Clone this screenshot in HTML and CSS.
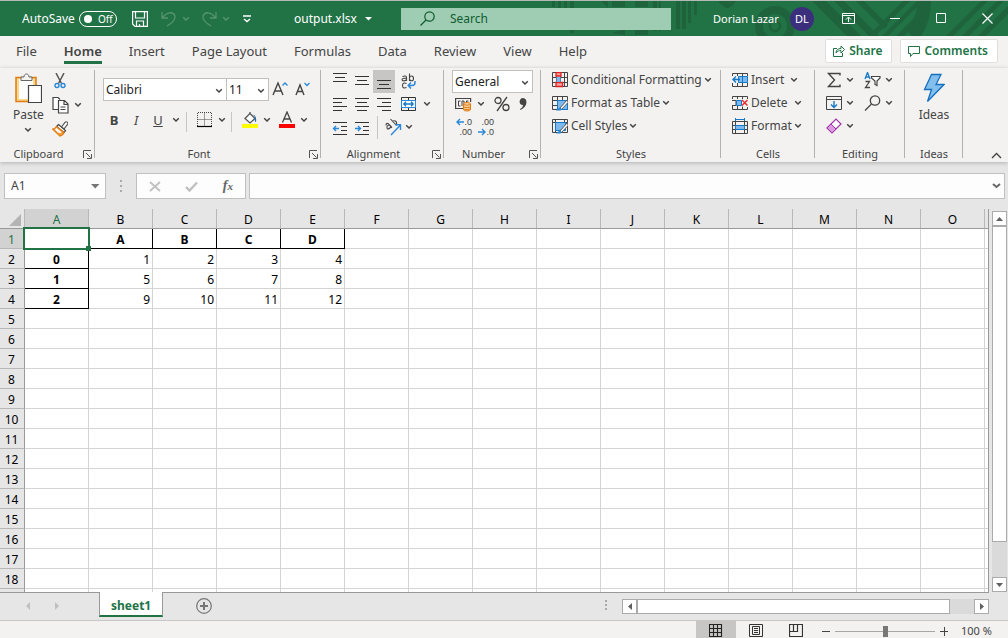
FILE: index.html
```html
<!DOCTYPE html>
<html lang="en">
<head>
<meta charset="utf-8">
<title>output.xlsx</title>
<link rel="stylesheet" href="styles.css">
</head>
<body>
<svg class="defs" aria-hidden="true">
  <symbol id="chev" viewBox="0 0 8 6"><path d="M1.2 1.2L4 4l2.8-2.8" fill="none" stroke="currentColor" stroke-width="1.5"/></symbol>
  <symbol id="launch" viewBox="0 0 9 9"><path d="M.5 8V.5H8M3 3l4.500 4.500M8.500 4v4.500H4" fill="none" stroke="#555"/></symbol>
</svg>

<header class="titlebar">
  <svg class="pattern" viewBox="0 0 458 35" aria-hidden="true">
    <g fill="#1f633d">
      <path d="M2 0h3v6H2zM8 0h3v28H8zM14 0h3v28h-3zM20 0h4v32h-4zM51 0l7 7V0zM62 0h13v6H62zM85 0h13v6H85zM103 0h4v30h-4zM109 0h2v30h-2zM62 32l13-4v6zM85 28h13v6H85zM126 0h4v28h-4zM132 0h4v28h-4zM138 0h3v22h-3zM144 0h3v14h-3zM168 0h18q-8 14-18 0z"/>
      <path d="M262 0h14l35 35h-14zM284 0h10l35 35h-10zM306 0h8l24 24-4 4z"/>
      <path d="M318 35L353 0h7l-35 35zM332 35L367 0h6l-35 35zM346 35l27-27v8l-19 19zM396 35l35-35h7l-35 35zM412 35l35-35h7l-35 35zM428 35l30-30v8l-22 22z"/>
    </g>
    <g fill="none" stroke="#1f633d">
      <circle cx="225" cy="25" r="16" stroke-width="8"/>
      <circle cx="225" cy="25" r="5" stroke-width="3"/>
      <path d="M374 0q0 22-12 35" stroke-width="14"/>
    </g>
  </svg>
  <div class="quick">
    <label class="autosave"><span>AutoSave</span><button class="toggle" role="switch" aria-checked="false"><i></i>Off</button></label>
    <button class="tool save" aria-label="Save"><svg width="16" height="16" fill="none" stroke="#fff" stroke-width="1.2"><path d="M.6.6h14.800v14.800H3L.6 13zM3.500.6v6.400h9V.6M4.500 15.400V10h7v5.400M7.500 15.400V13"/></svg></button>
    <button class="tool dim undo" aria-label="Undo"><svg width="16" height="17" fill="none" stroke="currentColor" stroke-width="1.3"><path d="M1 2v6h6M1.500 7.500C6 2 12 1 14 6c1 4-3 7-8 10"/></svg><svg class="chev"><use href="#chev"/></svg></button>
    <button class="tool dim redo" aria-label="Redo"><svg width="16" height="17" fill="none" stroke="currentColor" stroke-width="1.3"><path d="M15 2v6H9M14.500 7.500C10 2 4 1 2 6c-1 4 3 7 8 10"/></svg><svg class="chev"><use href="#chev"/></svg></button>
    <button class="tool" aria-label="Customize toolbar"><svg width="8" height="8" fill="none" stroke="#fff" stroke-width="1.400"><path d="M0 1h8M1 4l3 2.500L7 4"/></svg></button>
    <button class="tool filename">output.xlsx<svg width="7" height="4"><path d="M0 0h7L3.500 3.500z" fill="#fff"/></svg></button>
  </div>
  <label class="search"><svg width="15" height="15" fill="none" stroke="#0e5c2f" stroke-width="1.200"><circle cx="9.500" cy="5.500" r="4.700"/><path d="M6 9L.5 14.500"/></svg><input type="text" placeholder="Search" aria-label="Search"></label>
  <div class="account">
    <span class="user">Dorian Lazar</span><span class="avatar">DL</span>
    <div class="window">
      <button class="tool" aria-label="Ribbon display options"><svg width="13" height="11" fill="none" stroke="#fff"><path d="M.5.5h12v10H.5zM.5 2.500h12M6.500 9V4.500M4 6.500l2.500-2.500L9 6.500"/></svg></button>
      <button class="tool" aria-label="Minimize"><svg width="11" height="11" stroke="#fff"><path d="M0 5.500h10"/></svg></button>
      <button class="tool" aria-label="Maximize"><svg width="11" height="11" fill="none" stroke="#fff"><path d="M.5.5h9v9h-9z"/></svg></button>
      <button class="tool" aria-label="Close"><svg width="11" height="11" stroke="#fff" stroke-width="1.200"><path d="M.5.5l10 10M10.500.5l-10 10"/></svg></button>
    </div>
  </div>
</header>

<nav class="tabs">
  <a href="#file">File</a><a href="#home" class="on">Home</a><a href="#insert">Insert</a><a href="#layout">Page Layout</a><a href="#formulas">Formulas</a><a href="#data">Data</a><a href="#review">Review</a><a href="#view">View</a><a href="#help">Help</a>
  <div class="share">
    <button><svg width="12" height="12" fill="none" stroke="#217346"><path d="M4 3.500H.5v8h9V8M3 8c0-3 2-4.500 5-4.500V1l3.500 3.500L8 8V5.500C6 5.500 4.500 6 3 8z"/></svg>Share</button>
    <button><svg width="12" height="12" fill="none" stroke="#217346"><path d="M.5 1.500h11v7H5L2.500 11.500v-3h-2z"/></svg>Comments</button>
  </div>
</nav>

<div class="ribbon">
  <section class="group g-clip">
    <div class="body">
      <button class="big"><svg width="28" height="31"><path d="M2 4.500h20v24H2z" fill="#f8d98c" stroke="#e07b10" stroke-width="1.500"/><path d="M5 6h14v20H5z" fill="#fcfcfc"/><path d="M7 7.500V4h3c0-4 5-4 5 0h3v3.500z" fill="#f3f2f1" stroke="#666"/><path d="M14.500 12.500h13v17h-13z" fill="#fff" stroke="#444" stroke-width="1.200"/></svg>Paste<svg class="chev"><use href="#chev"/></svg></button>
      <div class="stack">
        <button class="b" aria-label="Cut"><svg width="16" height="16" fill="none"><path d="M4 0l5.500 10.500M12 0L6.500 10.500" stroke="#555" stroke-width="1.500"/><circle cx="5" cy="12.500" r="2" stroke="#2b88d8" stroke-width="1.400"/><circle cx="11" cy="12.500" r="2" stroke="#2b88d8" stroke-width="1.400"/></svg></button>
        <button class="b" aria-label="Copy"><svg width="17" height="17" fill="#fff" stroke="#444" stroke-width="1.200"><path d="M7 12.500H1v-12h5l2 2"/><path d="M6.500 3.500h6l3.500 3.500v9H6.500zM12 3.500V7.500h4M8.500 10h5M8.500 12.500h5"/></svg><svg class="chev"><use href="#chev"/></svg></button>
        <button class="b" aria-label="Format Painter"><svg width="16" height="16"><path d="M9.500 6L13 1.500q1.500-1.500 2.500 0t-.5 2.500L12 8z" fill="#fff" stroke="#555" stroke-width="1.200"/><path d="M6.500 3.500l7 6-1.500 2-7.500-6z" fill="#fff" stroke="#444" stroke-width="1.200"/><path d="M4.500 5.500C3 7.500 1.500 8 .5 8l7.500 7.200c2-.5 3.500-2 4-3.700z" fill="#f6a04c" stroke="#e07b10" stroke-width="1.200"/><path d="M4.500 7L9.500 11l-1 1-2.500-.5L3 8.500z" fill="#fff"/></svg></button>
      </div>
    </div>
    <h2>Clipboard</h2><button class="launch" aria-label="Clipboard options"><svg width="9" height="9"><use href="#launch"/></svg></button>
  </section>

  <section class="group g-font">
    <div class="body rows">
      <div class="row combos">
        <span class="combo face"><select aria-label="Font"><option>Calibri</option></select><svg class="chev"><use href="#chev"/></svg></span><span class="combo size"><select aria-label="Font size"><option>11</option></select><svg class="chev"><use href="#chev"/></svg></span>
        <button class="b a1" aria-label="Increase font size"><svg width="16" height="17" fill="none"><path d="M1 14L6 2l5 12M2.500 10h7" stroke="#444" stroke-width="1.400"/><path d="M10.500 4.500L13 2l2.500 2.500" stroke="#2b88d8" stroke-width="1.300"/></svg></button>
        <button class="b a2" aria-label="Decrease font size"><svg width="16" height="17" fill="none"><path d="M1 14L5 4l4 10M2.500 10.500h5" stroke="#444" stroke-width="1.400"/><path d="M9.500 2L12 4.500 14.500 2" stroke="#2b88d8" stroke-width="1.300"/></svg></button>
      </div>
      <div class="row marks">
        <button class="b" aria-label="Bold"><b>B</b></button><button class="b" aria-label="Italic"><em>I</em></button><button class="b" aria-label="Underline"><u>U</u></button><button class="b arrow" aria-label="Underline style"><svg class="chev"><use href="#chev"/></svg></button>
        <i class="sep"></i>
        <button class="b split" aria-label="Borders"><svg width="16" height="16" fill="none"><path d="M.5 14V.5h14V14M7.500.5V14M.5 7.500h14" stroke="#444" stroke-dasharray="1 1"/><path d="M0 14.500h15" stroke="#000" stroke-width="1.200"/></svg><svg class="chev"><use href="#chev"/></svg></button>
        <i class="sep"></i>
        <button class="b split" aria-label="Fill color"><svg width="16" height="18"><path d="M8 2.500l5 5-5 4.500-5-4.500L8 2.500V1" fill="#fff" stroke="#555" stroke-width="1.300"/><path d="M11 3.500q4 1 3 7.500-2 0-1-5z" fill="#1f6fb5"/><path d="M0 13h16v4H0z" fill="#ff0"/></svg><svg class="chev"><use href="#chev"/></svg></button>
        <button class="b split" aria-label="Font color"><svg width="16" height="18"><path d="M3.500 11.500L8 1l4.500 10.500M5 8h6" fill="none" stroke="#444" stroke-width="1.300"/><path d="M0 13h16v4H0z" fill="red"/></svg><svg class="chev"><use href="#chev"/></svg></button>
      </div>
    </div>
    <h2>Font</h2><button class="launch" aria-label="Font options"><svg width="9" height="9"><use href="#launch"/></svg></button>
  </section>

  <section class="group g-align">
    <div class="body aligns">
      <button class="b" aria-label="Top align"><svg width="16" height="16" stroke="#333"><path d="M1 .5h14M3 4.500h10M1 8.500h14"/></svg></button>
      <button class="b" aria-label="Middle align"><svg width="16" height="16" stroke="#333"><path d="M1 3.500h14M3 7.500h10M1 11.500h14"/></svg></button>
      <button class="b pressed" aria-label="Bottom align"><svg width="16" height="16" stroke="#333"><path d="M1 7.500h14M3 11.500h10M1 15.500h14"/></svg></button>
      <button class="b wrap" aria-label="Wrap text"><svg width="16" height="17" fill="none" stroke="#444" stroke-width="1.100"><path d="M1.500 3.500q4-1.500 4 1V8M5.500 5C2.500 5 1 5.500 1 6.800S4.500 8.500 5.500 6.500M8.500.5v7.500M8.500 5q0-2 2-2t2 2.400-2 2.400-2-2M5.500 10.500q-4-1.500-4 2t4 2"/><path d="M14 8v1.500q0 3-3 3H7.500M10 9.500l-2.800 3 2.800 3" stroke="#2b88d8" stroke-width="1.500"/></svg></button>
      <button class="b" aria-label="Align left"><svg width="16" height="16" stroke="#333"><path d="M1 2.500h14M1 6.500h9M1 10.500h14M1 14.500h9"/></svg></button>
      <button class="b" aria-label="Center"><svg width="16" height="16" stroke="#333"><path d="M1 2.500h14M3 6.500h10M1 10.500h14M3 14.500h10"/></svg></button>
      <button class="b" aria-label="Align right"><svg width="16" height="16" stroke="#333"><path d="M1 2.500h14M6 6.500h9M1 10.500h14M6 14.500h9"/></svg></button>
      <button class="b split" aria-label="Merge and center"><svg width="16" height="16" fill="none"><path d="M.5 1.500h14v13H.5zM7.500 1.500v3M7.500 11.500v3" stroke="#333"/><path d="M.5 4.500h14v7H.5z" fill="#fff" stroke="#2b88d8"/><path d="M3 8h9M5 5.800L2.800 8 5 10.200M10 5.800L12.200 8 10 10.200" stroke="#1679c5" stroke-width="1.300"/></svg><svg class="chev"><use href="#chev"/></svg></button>
      <button class="b" aria-label="Decrease indent"><svg width="16" height="16" viewBox="0 -2 16 16" fill="none" stroke="#333"><path d="M1 1.500h14M9 5.500h6M9 9.500h6M1 13.500h14"/><path d="M7 7.500H1.500M4 5L1.500 7.500 4 10" stroke="#2b88d8" stroke-width="1.400"/></svg></button>
      <button class="b" aria-label="Increase indent"><svg width="16" height="16" viewBox="0 -2 16 16" fill="none" stroke="#333"><path d="M1 1.500h14M9 5.500h6M9 9.500h6M1 13.500h14"/><path d="M1 7.500h5.500M4 5l2.500 2.500L4 10" stroke="#2b88d8" stroke-width="1.400"/></svg></button>
      <button class="b orient" aria-label="Orientation"><svg width="18" height="18" fill="none" stroke="#444" stroke-width="1.100"><path d="M2 7.500q0-2.500 2-2l4 4M5.500 7q-3 .5-2.500 3t4.500-1.500M6.500 1l6 6.500M8.500 3.500q2-1.500 3.500 0t-.5 3.500"/><path d="M7 17L16.500 7M11.500 6.800h5V12" stroke="#2b88d8" stroke-width="1.400"/></svg><svg class="chev"><use href="#chev"/></svg></button>
    </div>
    <h2>Alignment</h2><button class="launch" aria-label="Alignment options"><svg width="9" height="9"><use href="#launch"/></svg></button>
  </section>

  <section class="group g-num">
    <div class="body rows3">
      <span class="combo general"><select aria-label="Number format"><option>General</option></select><svg class="chev"><use href="#chev"/></svg></span>
      <div class="row nums">
        <button class="b split" aria-label="Accounting format"><svg width="17" height="16" fill="none"><path d="M8 12.500H.6v-10h15V6" stroke="#444" stroke-width="1.200"/><path d="M5.500 5H3.500v5h2M7 10V5h2v3M11.500 7V5h2" stroke="#444"/><path d="M8.500 8v5.500q0 1.500 3.500 1.500t3.500-1.500V8q0-1.500-3.500-1.500T8.500 8z" fill="#fbd3a4" stroke="#e07b10"/><path d="M8.500 8.500q3.500 1.500 7 0M8.500 11q3.500 1.500 7 0M8.500 13q3.500 1.500 7 0" stroke="#e07b10"/></svg><svg class="chev"><use href="#chev"/></svg></button>
        <button class="b" aria-label="Percent"><svg width="16" height="16" fill="none" stroke="#444" stroke-width="1.300"><circle cx="4" cy="4.500" r="3"/><circle cx="12" cy="11.500" r="3"/><path d="M13 1L3 15"/></svg></button>
        <button class="b" aria-label="Comma style"><svg width="10" height="14"><path d="M5 1c5 0 5 9-2.500 12l-.5-1c2-1 3-2.500 3-4C0 8 1 1 5 1z" fill="#444"/></svg></button>
      </div>
      <div class="row decimals">
        <button class="b dec" aria-label="Increase decimal"><span><svg width="8" height="8" fill="none" stroke="#2b88d8" stroke-width="1.400"><path d="M8 4H1M4 1L1 4l3 3"/></svg>.0</span><span>.00</span></button>
        <button class="b dec" aria-label="Decrease decimal"><span>.00</span><span><svg width="8" height="8" fill="none" stroke="#2b88d8" stroke-width="1.400"><path d="M0 4h7M4 1l3 3-3 3"/></svg>.0</span></button>
      </div>
    </div>
    <h2>Number</h2><button class="launch" aria-label="Number options"><svg width="9" height="9"><use href="#launch"/></svg></button>
  </section>

  <section class="group g-styles">
    <div class="body list">
      <button class="b"><svg width="16" height="16" fill="none"><path d="M.5.5h15v14H.5zM.5 5.500h15M.5 10.500h15M4.500.5v14M8.500.5v14M12.500.5v14" stroke="#444"/><path d="M4 .5h5V4H4zM4 10.500h6.500v4H4z" fill="#f6a3a3" stroke="#e02020" stroke-width="1.300"/><path d="M4.500 5h4v5h-4z" fill="#7db9ee"/></svg>Conditional Formatting<svg class="chev"><use href="#chev"/></svg></button>
      <button class="b"><svg width="16" height="16" fill="none"><path d="M.5 1.500h15v13H.5zM.5 5.500h15M.5 10.500h7M5.500 1.500v13M10.500 1.500v4" stroke="#444"/><path d="M5.500 5.500h10v9h-10z" fill="#7db9ee" stroke="#1679c5"/><path d="M15.500 4.500L8 13l1.500 1.500 6.500-7z" fill="#fff" stroke="#555"/><path d="M7.500 12.500L4 15.500h4.500q1.500-1 1-2z" fill="#2b88d8"/></svg>Format as Table<svg class="chev"><use href="#chev"/></svg></button>
      <button class="b"><svg width="16" height="16" fill="none"><path d="M.5 1.500h15v13H.5zM.5 4.500h15M3.500 1.500v13M12.500 1.500v3" stroke="#444"/><path d="M3.500 4.500h10v8h-10z" fill="#7db9ee" stroke="#1679c5"/><path d="M15.500 4.500L8 13l1.500 1.500 6.500-7z" fill="#fff" stroke="#555"/><path d="M7.500 12.500L4 15.500h4.500q1.500-1 1-2z" fill="#2b88d8"/></svg>Cell Styles<svg class="chev"><use href="#chev"/></svg></button>
    </div>
    <h2>Styles</h2>
  </section>

  <section class="group g-cells">
    <div class="body list">
      <button class="b wide"><svg width="16" height="16" fill="none"><path d="M.5 4V1.500h15V4M5.500 1.500V4M10.500 1.500V4M.5 11v3.500h15V11M5.500 11v3.500M10.500 11v3.500" stroke="#444"/><path d="M6.500 4.500h9v6h-9z" fill="#7db9ee" stroke="#1679c5"/><path d="M10.500 4.500v6" stroke="#1679c5"/><path d="M8 7.500H1M4 4.500l-3 3 3 3" stroke="#1679c5" stroke-width="1.400"/></svg>Insert<svg class="chev"><use href="#chev"/></svg></button>
      <button class="b wide"><svg width="16" height="16" fill="none"><path d="M.5 4V1.500h15V4M5.500 1.500V4M10.500 1.500V4M.5 11v3.500h15V12M5.500 11v3.500M10.500 11.500v3M0 5.500h4v5H0" stroke="#444"/><path d="M4.500 5.500h5v5h-5z" fill="#7db9ee" stroke="#1679c5"/><path d="M10 5l5.500 5.500M15.500 5L10 10.500" stroke="#e83030" stroke-width="1.500"/></svg>Delete<svg class="chev"><use href="#chev"/></svg></button>
      <button class="b"><svg width="16" height="16" fill="none"><path d="M.5 3.500v12h15v-12zM.5 7.500h15M.5 11.500h15M3.500 3.500v12M12.500 3.500v12" stroke="#444"/><path d="M3.500 7.500h9v4h-9z" fill="#7db9ee" stroke="#1679c5"/><path d="M3.500 1.500h9M3.500 0v3M12.500 0v3" stroke="#1679c5"/></svg>Format<svg class="chev"><use href="#chev"/></svg></button>
    </div>
    <h2>Cells</h2>
  </section>

  <section class="group g-edit">
    <div class="body edits">
      <button class="b split" aria-label="AutoSum"><svg width="16" height="16" fill="none" stroke="#444" stroke-width="1.400"><path d="M14 3.500V1.500H2.500L8.500 8l-6 6.500H14v-2"/></svg><svg class="chev"><use href="#chev"/></svg></button>
      <button class="b split" aria-label="Sort and filter"><svg width="17" height="17" fill="none"><path d="M1 7l2.500-6.500L6 7M2 5h3" stroke="#1679c5" stroke-width="1.300"/><path d="M1.500 9.500h4L1.500 15.500h4.500" stroke="#444" stroke-width="1.300"/><path d="M7.500 4.500h8.500v1.500L13 9v4.500l-2-1V9L7.500 6z" fill="#fff" stroke="#444" stroke-width="1.200"/></svg><svg class="chev"><use href="#chev"/></svg></button>
      <button class="b split" aria-label="Fill"><svg width="16" height="16" fill="none"><path d="M.5 1.500h15v13H.5zM.5 4.500h15" stroke="#444"/><path d="M8 6v6.500M5 9.500l3 3 3-3" stroke="#1679c5" stroke-width="1.400"/></svg><svg class="chev"><use href="#chev"/></svg></button>
      <button class="b split" aria-label="Find and select"><svg width="17" height="16" fill="none" stroke="#444" stroke-width="1.300"><circle cx="11" cy="5.500" r="4.700"/><path d="M7.500 9L1 15.500"/></svg><svg class="chev"><use href="#chev"/></svg></button>
      <button class="b split" aria-label="Clear"><svg width="16" height="16"><path d="M1 10L10 1l5 5-9 9z" fill="#fff" stroke="#a033a8" stroke-width="1.200"/><path d="M1 10l4-4 5 5-4 4z" fill="#dc9be0" stroke="#a033a8"/></svg><svg class="chev"><use href="#chev"/></svg></button>
    </div>
    <h2>Editing</h2>
  </section>

  <section class="group g-ideas">
    <div class="body">
      <button class="big"><svg width="22" height="31"><path d="M8.500 1.500h9.500l-5 10h8L4.500 28.500l4-12H1.500z" fill="#83beec" stroke="#1670c0" stroke-width="1.300"/></svg>Ideas</button>
    </div>
    <h2>Ideas</h2>
  </section>
  <button class="collapse" aria-label="Collapse ribbon"><svg width="11" height="7" fill="none" stroke="#444" stroke-width="1.400"><path d="M1 6l4.500-4.500L10 6"/></svg></button>
</div>

<div class="formula">
  <span class="combo name"><input type="text" value="A1" aria-label="Name box"><svg class="tri" width="9" height="5"><path d="M0 0h8.500L4.200 4.500z" fill="#777"/></svg></span>
  <svg class="grip" width="3" height="12" fill="#aaa"><path d="M0 0h2v2H0zM0 5h2v2H0zM0 10h2v2H0z"/></svg>
  <div class="fx">
    <button class="tool" aria-label="Cancel"><svg width="12" height="11" stroke="#c0c0c0" stroke-width="1.800"><path d="M1 1l10 9M11 1L1 10"/></svg></button>
    <button class="tool" aria-label="Enter"><svg width="13" height="11" fill="none" stroke="#c0c0c0" stroke-width="2.400"><path d="M1 6l3.500 3.500L12 1.500"/></svg></button>
    <button class="tool fn" aria-label="Insert function">f<sub>x</sub></button>
  </div>
  <span class="combo entry"><input type="text" aria-label="Formula"><svg width="9" height="6" fill="none" stroke="#666" stroke-width="2"><path d="M1 1l3.500 3L8 1"/></svg></span>
</div>

<main class="work">
  <div class="sheet">
    <table>
      <colgroup><col class="rowhead"><col span="15" class="cell"><col></colgroup>
      <thead><tr><th class="corner"><svg width="12" height="12"><path d="M12 0v12H0z" fill="#b3b3b3"/></svg></th><th class="sel">A</th><th>B</th><th>C</th><th>D</th><th>E</th><th>F</th><th>G</th><th>H</th><th>I</th><th>J</th><th>K</th><th>L</th><th>M</th><th>N</th><th>O</th><th></th></tr></thead>
      <tbody>
        <tr><th class="sel">1</th><td class="active"><i></i></td><td class="h">A</td><td class="h">B</td><td class="h">C</td><td class="h">D</td><td><td><td><td><td><td><td><td><td><td><td></tr>
        <tr><th>2</th><td class="h">0</td><td>1</td><td>2</td><td>3</td><td>4</td><td><td><td><td><td><td><td><td><td><td><td></tr>
        <tr><th>3</th><td class="h">1</td><td>5</td><td>6</td><td>7</td><td>8</td><td><td><td><td><td><td><td><td><td><td><td></tr>
        <tr><th>4</th><td class="h">2</td><td>9</td><td>10</td><td>11</td><td>12</td><td><td><td><td><td><td><td><td><td><td><td></tr>
        <tr><th>5</th><td><td><td><td><td><td><td><td><td><td><td><td><td><td><td><td></tr>
        <tr><th>6</th><td><td><td><td><td><td><td><td><td><td><td><td><td><td><td><td></tr>
        <tr><th>7</th><td><td><td><td><td><td><td><td><td><td><td><td><td><td><td><td></tr>
        <tr><th>8</th><td><td><td><td><td><td><td><td><td><td><td><td><td><td><td><td></tr>
        <tr><th>9</th><td><td><td><td><td><td><td><td><td><td><td><td><td><td><td><td></tr>
        <tr><th>10</th><td><td><td><td><td><td><td><td><td><td><td><td><td><td><td><td></tr>
        <tr><th>11</th><td><td><td><td><td><td><td><td><td><td><td><td><td><td><td><td></tr>
        <tr><th>12</th><td><td><td><td><td><td><td><td><td><td><td><td><td><td><td><td></tr>
        <tr><th>13</th><td><td><td><td><td><td><td><td><td><td><td><td><td><td><td><td></tr>
        <tr><th>14</th><td><td><td><td><td><td><td><td><td><td><td><td><td><td><td><td></tr>
        <tr><th>15</th><td><td><td><td><td><td><td><td><td><td><td><td><td><td><td><td></tr>
        <tr><th>16</th><td><td><td><td><td><td><td><td><td><td><td><td><td><td><td><td></tr>
        <tr><th>17</th><td><td><td><td><td><td><td><td><td><td><td><td><td><td><td><td></tr>
        <tr><th>18</th><td><td><td><td><td><td><td><td><td><td><td><td><td><td><td><td></tr>
        <tr><th></th><td><td><td><td><td><td><td><td><td><td><td><td><td><td><td><td></tr>
      </tbody>
    </table>
  </div>
  <div class="vscroll">
    <button aria-label="Scroll up"><svg width="7" height="4"><path d="M0 4h7L3.500 0z" fill="#606060"/></svg></button>
    <div class="track"><div class="thumb"></div></div>
    <button aria-label="Scroll down"><svg width="7" height="4"><path d="M0 0h7L3.500 4z" fill="#606060"/></svg></button>
  </div>
</main>

<div class="sheetbar">
  <div class="navs"><button class="tool" aria-label="Previous sheet"><svg width="5" height="8"><path d="M4 0v8L0 4z" fill="#c0c0c0"/></svg></button><button class="tool" aria-label="Next sheet"><svg width="5" height="8"><path d="M0 0v8l4-4z" fill="#c0c0c0"/></svg></button></div>
  <a class="sheettab" href="#sheet1">sheet1</a>
  <button class="tool add" aria-label="New sheet"><svg width="16" height="16" fill="none" stroke="#777"><circle cx="8" cy="8" r="7.300" stroke-width="1.200"/><path d="M8 4v8M4 8h8" stroke-width="2"/></svg></button>
  <svg class="grip" width="3" height="12" fill="#aaa"><path d="M0 0h2v2H0zM0 4h2v2H0zM0 8h2v2H0z"/></svg>
  <div class="hscroll">
    <button aria-label="Scroll left"><svg width="4" height="7"><path d="M4 0v7L0 3.500z" fill="#606060"/></svg></button>
    <div class="track"><div class="thumb"></div></div>
    <button aria-label="Scroll right"><svg width="4" height="7"><path d="M0 0v7l4-3.500z" fill="#606060"/></svg></button>
  </div>
</div>

<footer class="status">
  <button class="view on" aria-label="Normal"><svg width="14" height="14" fill="none" stroke="#222" stroke-width="1.100"><path d="M.5.5h12v12H.5zM4.500.5v12M8.500.5v12M.5 4.500h12M.5 8.500h12"/></svg></button>
  <button class="view" aria-label="Page layout"><svg width="14" height="14" fill="none" stroke="#333"><path d="M.5.5h13v12H.5zM3.500 2.500h7v8h-7zM5 4.500h4M5 6.500h4M5 8.500h4"/></svg></button>
  <button class="view" aria-label="Page break preview"><svg width="14" height="14" fill="none" stroke="#333" stroke-width="1.200"><path d="M.5.5h13v12H.5zM.5 7.500h8v-7M4.500.5v7"/></svg></button>
  <button class="zoom" aria-label="Zoom out"><svg width="8" height="9" stroke="#444"><path d="M0 4.500h8"/></svg></button>
  <input class="slider" type="range" min="0" max="100" value="50" aria-label="Zoom">
  <button class="zoom" aria-label="Zoom in"><svg width="9" height="9" stroke="#444"><path d="M0 4.500h8M4.500 0v9"/></svg></button>
  <span class="pct">100 %</span>
</footer>
</body>
</html>
```

FILE: styles.css
```css
* { box-sizing: border-box; }
body {
  margin: 0;
  height: 100vh;
  display: flex;
  flex-direction: column;
  overflow: hidden;
  background: #e6e6e6;
  color: #444;
  font: 12px/16px "Noto Sans", "Open Sans", sans-serif;
}
button, input, select { font: inherit; color: inherit; }
button { background: none; border: 0; padding: 0; border-radius: 0; }
svg { display: block; flex: none; }
a { color: inherit; text-decoration: none; }
.defs { position: absolute; width: 0; height: 0; }
.chev { width: 8px; height: 6px; }

.titlebar {
  position: relative;
  display: flex;
  align-items: center;
  height: 36px;
  flex: none;
  border-top: 1px solid #b4bab6;
  background: #217346;
  color: #fff;
}
.pattern { position: absolute; right: 0; top: 0; width: 458px; height: 35px; }
.quick { display: flex; align-items: center; width: 401px; padding-left: 22px; }
.tool { display: flex; align-items: center; justify-content: center; }
.autosave { display: flex; align-items: center; width: 110px; justify-content: space-between; padding-right: 15px; }
.toggle {
  display: flex;
  align-items: center;
  gap: 6px;
  width: 38px;
  height: 16px;
  padding-left: 4px;
  border: 1px solid #fff;
  border-radius: 8px;
  font-size: 10px;
}
.toggle i { width: 8px; height: 8px; border-radius: 50%; background: #fff; }
.save { width: 29px; justify-content: flex-start; }
.dim { color: #55946f; gap: 5px; width: 40px; justify-content: flex-start; }
.redo { width: 42px; }
.filename { gap: 8px; margin-left: 43px; }
.search {
  position: relative;
  display: flex;
  align-items: center;
  flex: 1;
  height: 22px;
  padding-left: 19px;
  gap: 15px;
  background: #9fcdb3;
}
.search input { flex: 1; min-width: 0; border: 0; padding: 0; background: none; outline: 0; }
.search input::placeholder { color: #0e5c2f; opacity: 1; }
.account { position: relative; display: flex; align-items: center; width: 337px; padding-left: 42px; padding-right: 15px; }
.user { width: 77px; white-space: nowrap; font-size: 11px; }
.avatar { width: 24px; height: 24px; border-radius: 50%; background: #3b2f7d; line-height: 24px; text-align: center; font-size: 11px; }
.window { display: flex; flex: 1; justify-content: space-between; padding-left: 28px; }

.tabs {
  display: flex;
  flex: none;
  height: 32px;
  padding-left: 16px;
  gap: 27px;
  background: #f3f2f1;
  font-size: 13px;
  line-height: 16px;
}
.tabs a { padding-top: 7px; height: 28px; }
.tabs .on { font-weight: 600; border-bottom: 3px solid #217346; }
.share { display: flex; gap: 8px; margin-left: auto; padding: 3px 10px 0 0; }
.share button {
  display: flex;
  align-items: center;
  gap: 4px;
  height: 24px;
  padding: 0 9px 0 7px;
  border: 1px solid #e1dfdd;
  border-radius: 2px;
  background: #fff;
  color: #217346;
  font-size: 12px;
  font-weight: 600;
}

.ribbon {
  position: relative;
  display: flex;
  flex: none;
  height: 94px;
  background: #f3f2f1;
  z-index: 1;
  box-shadow: 0 1px 4px #b0b0b0;
}
.group {
  position: relative;
  display: flex;
  flex-direction: column;
  background: linear-gradient(#b4b2b0, #b4b2b0) right 2px / 1px 88px no-repeat;
}
.body { display: flex; flex: 1; }
.group h2 { margin: 0; font: inherit; font-size: 11px; text-align: center; height: 16px; line-height: 16px; }
.launch { position: absolute; right: 3px; bottom: 3px; }
.b { display: flex; align-items: center; height: 23px; padding-bottom: 1px; white-space: nowrap; }
.big { display: flex; flex-direction: column; align-items: center; padding-top: 5px; line-height: 21px; font-size: 12px; height: 70px; }
.big .chev { margin-top: 2px; }
.sep { width: 1px; height: 20px; background: #c8c6c4; }
.combo { position: relative; display: flex; align-items: center; border: 1px solid #c2c0be; background: #fff; color: #222; height: 23px; }
.combo select { appearance: none; border: 0; background: none; width: 100%; height: 100%; padding: 0 2px; outline: 0; }
.combo .chev { position: absolute; right: 3px; top: 9px; pointer-events: none; color: #444; }

.g-clip { width: 95px; }
.g-clip h2 { padding-right: 18px; }
.g-clip .body { padding-left: 13px; gap: 8px; }
.stack { display: flex; flex-direction: column; padding-top: 2px; gap: 1px; }
.stack .b { gap: 5px; }

.g-font { width: 226px; }
.g-font h2, .g-align h2, .g-num h2 { padding-right: 18px; }
.rows { flex-direction: column; padding: 10px 0 0 8px; gap: 9px; }
.row { display: flex; align-items: center; }
.face { width: 124px; }
.size { width: 42px; border-left: 0; }
.a1 { margin-left: 3px; }
.a2 { margin-left: 7px; }
.marks .b { width: 22px; justify-content: center; padding-bottom: 3px; }
.marks { font-size: 13px; }
.marks .arrow { width: 14px; }
.marks .sep { margin: 0 7px 0 3px; }
.marks .split { width: 34px; gap: 5px; }
.marks .split + .split { margin-left: 3px; }

.g-align { width: 123px; }
.aligns { display: grid; grid-template-columns: 22px 22px 22px 1fr; grid-template-rows: repeat(3, 23px); padding: 2px 4px 0 8px; }
.aligns .b { justify-content: center; }
.aligns .wrap, .aligns .split, .aligns .orient { justify-content: flex-start; padding-left: 6px; gap: 6px; }
.aligns .orient { grid-column: 3 / 5; border-left: 1px solid #c8c6c4; margin-left: 4px; gap: 3px; }
.pressed { background: #c8c6c4; }

.g-num { width: 97px; }
.rows3 { flex-direction: column; padding: 2px 8px 0 8px; }
.nums { padding: 0 5px 0 3px; justify-content: space-between; }
.nums .split { gap: 5px; }
.decimals { gap: 4px; padding-left: 2px; }
.dec { flex-direction: column; align-items: flex-end; justify-content: center; font: 9px/10px "Liberation Sans", sans-serif; width: 18px; }
.dec span { display: flex; align-items: center; }

.g-styles { width: 180px; }
.list { flex-direction: column; align-items: flex-start; padding: 1px 0 0 11px; }
.list .b { gap: 3px; }
.list .chev { margin-left: -1px; }
.g-cells { width: 94px; }
.list .wide .chev { margin-left: 3px; }

.g-edit { width: 90px; }
.edits { display: grid; grid-template-columns: 38px 1fr; grid-template-rows: repeat(3, 23px); padding: 1px 0 0 11px; }
.edits .split { gap: 4px; }

.g-ideas { width: 58px; }
.g-ideas .body { justify-content: center; }
.collapse { margin-left: auto; align-self: flex-end; padding: 0 6px 3px 0; }

.formula { display: flex; align-items: center; flex: none; height: 47px; padding: 1px 3px 0 4px; }
.formula .combo { height: 26px; background: #fdfdfd; }
.combo input { border: 0; background: none; outline: 0; flex: 1; min-width: 0; padding: 0 6px; }
.name { width: 102px; padding-right: 5px; }
.name input { color: #444; }
.formula .grip { margin: 0 13px 0 14px; }
.fx { display: flex; align-items: center; justify-content: space-between; width: 110px; height: 26px; padding: 0 12px; border: 1px solid #c2c0be; background: #fdfdfd; }
.fn { font: italic bold 14px/16px "Liberation Serif", serif; color: #666; }
.fn sub { font-size: 11px; }
.entry { flex: 1; margin-left: 3px; padding-right: 3px; }

.work { display: flex; flex: 1; min-height: 0; }
.sheet { flex: 1; min-width: 0; overflow: hidden; border-right: 1px solid #999; }
.sheet table { width: 100%; table-layout: fixed; border-collapse: separate; border-spacing: 0; background: #fff; color: #000; line-height: 16px; }
.rowhead { width: 25px; }
.cell { width: 64px; }
.sheet th, .sheet td { height: 20px; padding: 3px 2px 0; border-right: 1px solid #d4d4d4; border-bottom: 1px solid #d4d4d4; text-align: right; }
.sheet th { background: #e6e6e6; font-weight: 400; text-align: center; }
.sheet thead th { border-right-color: #b8b8b8; border-bottom-color: #999; }
.sheet tbody th { border-right-color: #999; border-bottom-color: #b8b8b8; padding-left: 1px; }
.sheet .sel { background: #d2d2d2; color: #217346; }
.sheet th:last-child, .sheet td:last-child { border-right: 0; }
.sheet .corner { padding: 2px 2px 0 9px; border-right-color: #b8b8b8; }
.sheet .h { font-weight: 700; text-align: center; border-color: #000; }
.sheet .active { position: relative; }
.active i { position: absolute; inset: -2px; border: 2px solid #217346; }
.active i::after { content: ""; position: absolute; right: -3px; bottom: -3px; width: 5px; height: 5px; background: #217346; }
.vscroll { display: flex; flex-direction: column; width: 15px; margin: 2px 1px 0 3px; }
.vscroll button, .hscroll button { display: flex; align-items: center; justify-content: center; flex: none; width: 15px; height: 15px; border: 1px solid #ababab; background: #fff; }
.track { flex: 1; background: #dadada; }
.thumb { background: #fff; border: 1px solid #ababab; }
.vscroll .thumb { height: 90%; }

.sheetbar { display: flex; align-items: center; flex: none; height: 29px; border-bottom: 1px solid #c6c6c6; padding-right: 19px; background: linear-gradient(#999, #999) 0 0 / calc(100% - 19px) 1px no-repeat #e6e6e6; }
.navs { display: flex; gap: 24px; width: 99px; padding-left: 26px; }
.sheettab { align-self: flex-start; height: 25px; min-width: 64px; padding: 0 11px; border: 1px solid #999; border-width: 0 1px; border-bottom: 2px solid #217346; background: #fff; color: #217346; font-weight: 700; line-height: 27px; text-align: center; }
.add { margin-left: 33px; }
.sheetbar .grip { margin-left: auto; margin-right: 14px; }
.hscroll { display: flex; width: 40%; max-width: 367px; }
.hscroll .track { display: flex; }
.hscroll .thumb { width: 93%; }

.status { display: flex; flex: none; align-items: center; justify-content: flex-end; height: 17px; padding-right: 16px; background: #f3f2f1; overflow: hidden; }
.view { display: flex; align-items: center; justify-content: center; width: 40px; height: 17px; padding-top: 3px; }
.view.on { background: #c8c6c4; }
.zoom { padding: 3px 0 0; }
.view + .zoom { margin-left: 6px; }
.slider { appearance: none; width: 100px; height: 11px; margin: 4px 5px 0; background: linear-gradient(#a6a6a6, #a6a6a6) 0 5px / 100% 1px no-repeat; }
.slider::-webkit-slider-thumb { appearance: none; width: 5px; height: 11px; background: #777; }
.pct { width: 31px; margin-left: 12px; padding-top: 3px; white-space: nowrap; font-size: 11px; line-height: 14px; }
```
